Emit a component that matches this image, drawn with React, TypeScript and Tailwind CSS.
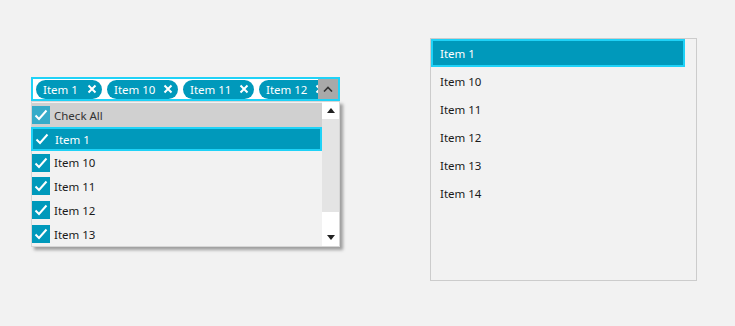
import { useState } from "react";

const tokens = ["Item 1", "Item 10", "Item 11", "Item 12"];
const dropItems = ["Item 1", "Item 10", "Item 11", "Item 12", "Item 13"];
const listItems = ["Item 1", "Item 10", "Item 11", "Item 12", "Item 13", "Item 14"];

function Check({ light }: { light?: boolean }) {
  return (
    <span
      className={`flex h-[18px] w-[18px] shrink-0 items-center justify-center ${
        light ? "bg-[#36abc9]" : "bg-[#0099bb]"
      }`}
    >
      <svg width="14" height="12" viewBox="0 0 14 12">
        <path d="M1.5 6.5 L5 10 L12.5 1.5" fill="none" stroke="white" strokeWidth="2" />
      </svg>
    </span>
  );
}

function Token({ label, wide }: { label: string; wide?: boolean }) {
  return (
    <span
      className={`flex h-[19px] shrink-0 items-center justify-between rounded-full bg-[#0099bb] pl-[7px] pr-[5px] text-white ${
        wide ? "w-[71px]" : "w-[66px]"
      }`}
    >
      <span className="pt-[1px]">{label}</span>
      <svg width="10" height="10" viewBox="0 0 10 10">
        <path d="M1.5 1.5 L8.5 8.5 M8.5 1.5 L1.5 8.5" stroke="white" strokeWidth="2" />
      </svg>
    </span>
  );
}

export default function App() {
  const [selected] = useState("Item 1");

  return (
    <div className="h-[326px] w-[735px] bg-[#f2f2f2] font-['Noto_Sans','Open_Sans',sans-serif] text-[11.5px] text-[#1a1a1a]">
      <div className="flex">
        <div className="ml-[31px] mt-[77px] w-[309px]">
          <div className="flex h-[24px] items-center border-2 border-[#1fd2f7] bg-white pl-[3px]">
            <div className="flex min-w-0 flex-1 gap-[5px] overflow-hidden">
              {tokens.map((t, i) => (
                <Token key={t} label={t} wide={i > 0} />
              ))}
            </div>
            <div className="flex h-[20px] w-[20px] shrink-0 items-center justify-center bg-[#a9a9a9]">
              <svg width="10" height="6" viewBox="0 0 10 6">
                <path d="M1 5.5 L5 1.5 L9 5.5" fill="none" stroke="#333" strokeWidth="1.6" />
              </svg>
            </div>
          </div>

          <div className="flex h-[146px] border border-[#d6d6d6] bg-[#f2f2f2] shadow-[3px_3px_3px_rgba(0,0,0,0.35)]">
            <div className="flex flex-1 flex-col pt-[1px]">
              <div className="flex h-[24px] items-center gap-[4px] bg-[#d0d0d0]">
                <Check light />
                <span className="pt-[1px] text-[#333]">Check All</span>
              </div>
              {dropItems.map((it) => (
                <div
                  key={it}
                  className={`flex h-[24px] items-center gap-[4px] ${
                    it === selected
                      ? "-ml-px gap-[3px] border-2 border-[#1fd2f7] bg-[#0099bb] text-white"
                      : ""
                  }`}
                >
                  <Check />
                  <span className="pt-[1px]">{it}</span>
                </div>
              ))}
            </div>
            <div className="flex w-[17px] flex-col bg-white">
              <div className="flex h-[17px] items-center justify-center">
                <svg width="8" height="5" viewBox="0 0 8 5">
                  <path d="M0 5 L4 0 L8 5 Z" fill="#222" />
                </svg>
              </div>
              <div className="h-[93px] bg-[#e4e4e4]" />
              <div className="flex flex-1 items-end justify-center pb-[6px]">
                <svg width="8" height="5" viewBox="0 0 8 5">
                  <path d="M0 0 L8 0 L4 5 Z" fill="#222" />
                </svg>
              </div>
            </div>
          </div>
        </div>

        <div className="ml-[90px] mt-[38px] h-[243px] w-[267px] border border-[#cccccc] bg-[#f2f2f2]">
          {listItems.map((it) => (
            <div
              key={it}
              className={`flex h-[28px] items-center pt-[1px] ${
                it === selected
                  ? "w-[254px] border-2 border-[#1fd2f7] bg-[#0099bb] pl-[7px] text-white"
                  : "pl-[9px]"
              }`}
            >
              {it}
            </div>
          ))}
        </div>
      </div>
    </div>
  );
}
